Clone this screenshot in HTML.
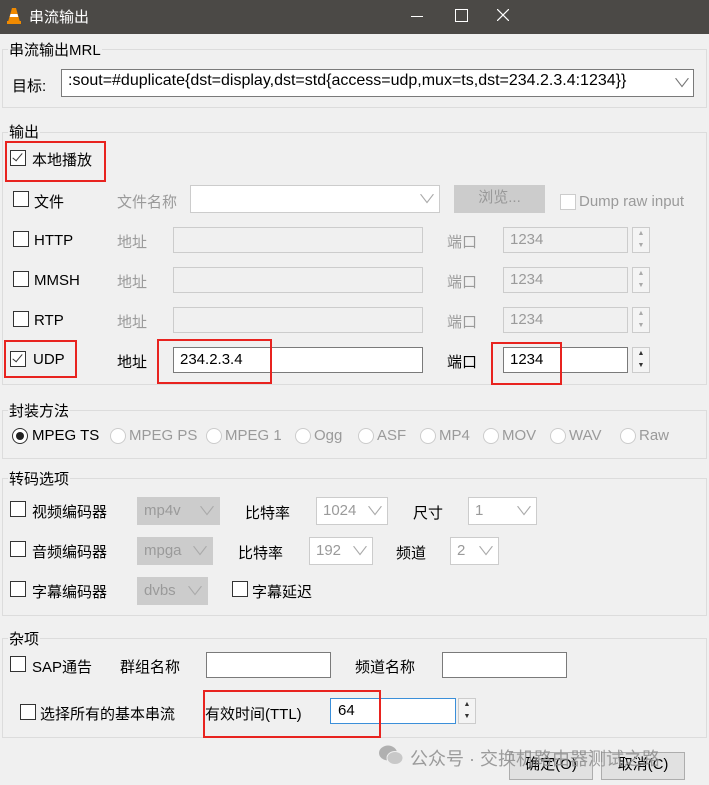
<!DOCTYPE html><html><head><meta charset="utf-8"><style>
body{margin:0;width:709px;height:785px;background:#f0f0f0;position:relative;overflow:hidden;font-family:"Liberation Sans","Noto Sans CJK SC",sans-serif;font-size:15px;color:#000}
.a{position:absolute;white-space:nowrap}
.tb{position:absolute;left:0;top:0;width:709px;height:34px;background:#4b4946;color:#fff}
.g{position:absolute;border:1px solid #dcdcdc;left:2px;width:703px}
.gl{position:absolute;background:#f0f0f0;padding:0 1px;font-size:15px}
.cb{position:absolute;width:14px;height:14px;border:1px solid #333;background:#fff}
.cb.ck::after{content:"";position:absolute;left:4px;top:0;width:4px;height:9px;border:solid #333;border-width:0 1.5px 1.5px 0;transform:rotate(40deg)}
.cb.dis{border-color:#ccc}
.in{position:absolute;border:1px solid #7a7a7a;background:#fff;height:26px;box-sizing:border-box}
.in.dis{border-color:#ccc;background:#f0f0f0}
.gr{color:#9a9a9a}
.red{position:absolute;border:2px solid #e8231f}
.sel{position:absolute;border:1px solid #ccc;background:#fff;height:28px;box-sizing:border-box;color:#9a9a9a;font-size:15px}
.sel.gray{background:#cccccc;border-color:#ccc}
.sel span{position:absolute;left:6px;top:4px}
.sel i{position:absolute;right:6px;top:4px;font-style:normal;color:#aaa;font-size:12px;transform:scaleX(1.5)}
.sp{position:absolute;width:18px;height:26px;border:1px solid #ccc;background:#f4f4f4;box-sizing:border-box;font-size:7px;text-align:center;line-height:12px;color:#333}
.rb{position:absolute;width:14px;height:14px;border:1px solid #ccc;border-radius:50%;background:#fff}
.btn{position:absolute;border:1px solid #adadad;background:#e1e1e1;height:26px;box-sizing:border-box;text-align:center;line-height:24px}
</style></head><body>
<div class="tb">
<svg class="a" style="left:6px;top:7px" width="16" height="18" viewBox="0 0 16 18"><path d="M6 1h4l4 14H2z" fill="#f08a00"/><path d="M4.5 7h7l.8 3H3.7z" fill="#fff"/><rect x="1" y="14" width="14" height="3" fill="#f08a00"/></svg>
<div class="a" style="left:29px;top:6px;font-size:15px">串流输出</div>
<div class="a" style="left:411px;top:16px;width:12px;height:1px;background:#fff"></div>
<div class="a" style="left:455px;top:9px;width:11px;height:11px;border:1px solid #fff"></div>
<svg class="a" style="left:497px;top:9px" width="12" height="12" viewBox="0 0 12 12"><path d="M0 0L12 12M12 0L0 12" stroke="#fff" stroke-width="1.2"/></svg>
</div>

<div class="g" style="top:49px;height:57px"></div><div class="gl a" style="left:8px;top:39px">串流输出MRL</div>
<div class="a" style="left:12px;top:75px">目标:</div>
<div class="in" style="left:61px;top:69px;width:633px;height:28px"></div>
<div class="a" style="left:68px;top:72px;font-size:16px">:sout=#duplicate{dst=display,dst=std{access=udp,mux=ts,dst=234.2.3.4:1234}}</div>
<div class="a" style="left:676px;top:74px;color:#777;font-size:12px;transform:scaleX(1.5)">∨</div>

<div class="g" style="top:132px;height:251px"></div><div class="gl a" style="left:8px;top:121px">输出</div>
<div class="cb ck" style="left:10px;top:150px"></div><div class="a" style="left:32px;top:149px">本地播放</div>
<div class="red" style="left:5px;top:141px;width:97px;height:37px"></div>

<div class="cb" style="left:13px;top:191px"></div><div class="a" style="left:34px;top:191px">文件</div>
<div class="a gr" style="left:117px;top:191px">文件名称</div>
<div class="sel" style="left:190px;top:185px;width:250px"><i>∨</i></div>
<div class="btn" style="left:454px;top:185px;width:91px;height:28px;background:#ccc;border-color:#ccc;color:#999">浏览...</div>
<div class="cb dis" style="left:560px;top:194px"></div><div class="a gr" style="left:579px;top:193px">Dump raw input</div>

<div class="cb" style="left:13px;top:231px"></div><div class="a" style="left:34px;top:232px">HTTP</div>
<div class="a gr" style="left:117px;top:231px">地址</div>
<div class="in dis" style="left:173px;top:227px;width:250px"></div>
<div class="a gr" style="left:447px;top:231px">端口</div>
<div class="in dis" style="left:503px;top:227px;width:125px"></div><div class="a gr" style="left:510px;top:231px">1234</div>
<div class="sp" style="left:632px;top:227px;color:#aaa">▲<br>▼</div>

<div class="cb" style="left:13px;top:271px"></div><div class="a" style="left:34px;top:272px">MMSH</div>
<div class="a gr" style="left:117px;top:271px">地址</div>
<div class="in dis" style="left:173px;top:267px;width:250px"></div>
<div class="a gr" style="left:447px;top:271px">端口</div>
<div class="in dis" style="left:503px;top:267px;width:125px"></div><div class="a gr" style="left:510px;top:271px">1234</div>
<div class="sp" style="left:632px;top:267px;color:#aaa">▲<br>▼</div>

<div class="cb" style="left:13px;top:311px"></div><div class="a" style="left:34px;top:312px">RTP</div>
<div class="a gr" style="left:117px;top:311px">地址</div>
<div class="in dis" style="left:173px;top:307px;width:250px"></div>
<div class="a gr" style="left:447px;top:311px">端口</div>
<div class="in dis" style="left:503px;top:307px;width:125px"></div><div class="a gr" style="left:510px;top:311px">1234</div>
<div class="sp" style="left:632px;top:307px;color:#aaa">▲<br>▼</div>

<div class="cb ck" style="left:10px;top:351px"></div><div class="a" style="left:33px;top:351px">UDP</div>
<div class="red" style="left:4px;top:340px;width:69px;height:34px"></div>
<div class="a" style="left:117px;top:351px">地址</div>
<div class="in" style="left:173px;top:347px;width:250px"></div><div class="a" style="left:180px;top:351px">234.2.3.4</div>
<div class="red" style="left:157px;top:339px;width:111px;height:41px"></div>
<div class="a" style="left:447px;top:351px">端口</div>
<div class="in" style="left:503px;top:347px;width:125px"></div><div class="a" style="left:510px;top:351px">1234</div>
<div class="red" style="left:491px;top:342px;width:67px;height:39px"></div>
<div class="sp" style="left:632px;top:347px">▲<br>▼</div>

<div class="g" style="top:410px;height:47px"></div><div class="gl a" style="left:8px;top:400px">封装方法</div>
<div class="rb" style="left:12px;top:428px;border-color:#333"><div style="position:absolute;left:3px;top:3px;width:8px;height:8px;border-radius:50%;background:#222"></div></div>
<div class="a" style="left:32px;top:427px">MPEG TS</div>
<div class="rb" style="left:110px;top:428px"></div><div class="a gr" style="left:129px;top:427px">MPEG PS</div>
<div class="rb" style="left:206px;top:428px"></div><div class="a gr" style="left:225px;top:427px">MPEG 1</div>
<div class="rb" style="left:295px;top:428px"></div><div class="a gr" style="left:314px;top:427px">Ogg</div>
<div class="rb" style="left:358px;top:428px"></div><div class="a gr" style="left:377px;top:427px">ASF</div>
<div class="rb" style="left:420px;top:428px"></div><div class="a gr" style="left:439px;top:427px">MP4</div>
<div class="rb" style="left:483px;top:428px"></div><div class="a gr" style="left:502px;top:427px">MOV</div>
<div class="rb" style="left:550px;top:428px"></div><div class="a gr" style="left:569px;top:427px">WAV</div>
<div class="rb" style="left:620px;top:428px"></div><div class="a gr" style="left:639px;top:427px">Raw</div>

<div class="g" style="top:478px;height:136px"></div><div class="gl a" style="left:8px;top:468px">转码选项</div>
<div class="cb" style="left:10px;top:501px"></div><div class="a" style="left:32px;top:501px">视频编码器</div>
<div class="sel gray" style="left:137px;top:497px;width:83px"><span>mp4v</span><i>∨</i></div>
<div class="a" style="left:245px;top:502px">比特率</div>
<div class="sel" style="left:316px;top:497px;width:72px"><span>1024</span><i>∨</i></div>
<div class="a" style="left:413px;top:502px">尺寸</div>
<div class="sel" style="left:468px;top:497px;width:69px"><span>1</span><i>∨</i></div>
<div class="cb" style="left:10px;top:541px"></div><div class="a" style="left:32px;top:541px">音频编码器</div>
<div class="sel gray" style="left:137px;top:537px;width:76px"><span>mpga</span><i>∨</i></div>
<div class="a" style="left:238px;top:542px">比特率</div>
<div class="sel" style="left:309px;top:537px;width:64px"><span>192</span><i>∨</i></div>
<div class="a" style="left:396px;top:542px">频道</div>
<div class="sel" style="left:450px;top:537px;width:49px"><span>2</span><i>∨</i></div>
<div class="cb" style="left:10px;top:581px"></div><div class="a" style="left:32px;top:581px">字幕编码器</div>
<div class="sel gray" style="left:137px;top:577px;width:71px"><span>dvbs</span><i>∨</i></div>
<div class="cb" style="left:232px;top:581px"></div><div class="a" style="left:252px;top:581px">字幕延迟</div>

<div class="g" style="top:638px;height:98px"></div><div class="gl a" style="left:8px;top:628px">杂项</div>
<div class="cb" style="left:10px;top:656px"></div><div class="a" style="left:32px;top:656px">SAP通告</div>
<div class="a" style="left:120px;top:656px">群组名称</div>
<div class="in" style="left:206px;top:652px;width:125px"></div>
<div class="a" style="left:355px;top:656px">频道名称</div>
<div class="in" style="left:442px;top:652px;width:125px"></div>
<div class="cb" style="left:20px;top:704px"></div><div class="a" style="left:40px;top:703px">选择所有的基本串流</div>
<div class="a" style="left:205px;top:703px">有效时间(TTL)</div>
<div class="in" style="left:330px;top:698px;width:126px;border-color:#3b8fd9"></div><div class="a" style="left:338px;top:702px">64</div>
<div class="red" style="left:203px;top:690px;width:174px;height:44px"></div>
<div class="sp" style="left:458px;top:698px">▲<br>▼</div>

<div class="btn" style="left:509px;top:752px;width:84px;height:28px">确定(O)</div>
<div class="btn" style="left:601px;top:752px;width:84px;height:28px">取消(C)</div>
<svg class="a" style="left:378px;top:744px" width="26" height="22" viewBox="0 0 26 22"><ellipse cx="10" cy="9" rx="9" ry="7.5" fill="#b0b0b0"/><ellipse cx="17" cy="14" rx="8" ry="6.5" fill="#c8c8c8" stroke="#f0f0f0"/></svg>
<div class="a" style="left:410px;top:745px;font-size:18px;color:rgba(140,140,140,.85)">公众号 · 交换机路由器测试之路</div>
</body></html>
